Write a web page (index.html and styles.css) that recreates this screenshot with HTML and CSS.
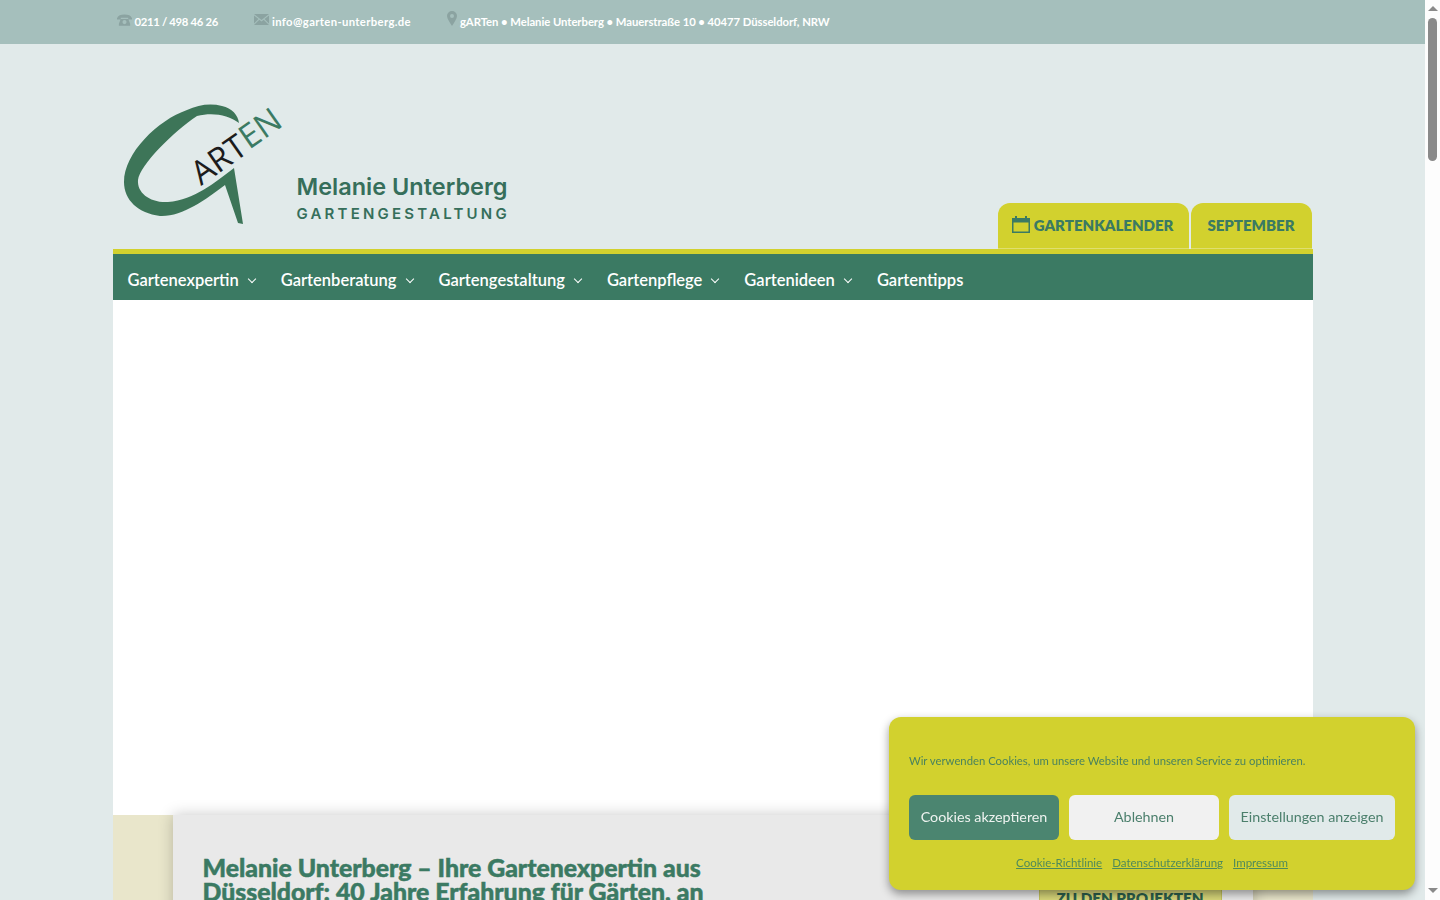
FILE: index.html
```html
<!DOCTYPE html>
<html>
<head>
    <title>Melanie Unterberg - Gartengestaltung</title>
    <link rel="stylesheet" href="styles.css">
</head>
<body>
    <div class="topbar">
        <div class="topbar-inner">
            <span class="contact contact-phone">
                <svg class="contact-icon" width="15" height="12" viewBox="0 0 16 12"><path d="M0 4C1 1 4 0 8 0s7 1 8 4v1.500h-4V3.500H4v2H0zM4 5h8l2 5v2H2v-2zM8 6a2.200 2.200 0 1 0 0 4.400A2.200 2.200 0 0 0 8 6z"/></svg>
                0211 / 498 46 26
            </span>
            <span class="contact contact-mail">
                <svg class="contact-icon" width="15" height="11" viewBox="0 0 15 11"><path d="M0 0h15L7.500 6zM0 1.500l4.500 3.600L0 9.500zM15 1.500l-4.500 3.600 4.500 4.400zM5.300 5.800l2.200 1.700 2.200-1.700L15 11H0z"/></svg>
                info@garten-unterberg.de
            </span>
            <span class="contact contact-address">
                <svg class="contact-icon pin" width="10" height="15" viewBox="0 0 10 15"><path d="M5 0a5 5 0 0 1 5 5c0 3-3 6.500-5 10C3 11.500 0 8 0 5a5 5 0 0 1 5-5zm0 3a2 2 0 1 0 0 4 2 2 0 0 0 0-4z" fill-rule="evenodd"/></svg>
                gARTen • Melanie Unterberg • Mauerstraße 10 • 40477 Düsseldorf, NRW
            </span>
        </div>
    </div>

    <div class="wrap">
        <header class="header">
            <div class="logo">
                <svg class="logo-mark" width="160" height="120" viewBox="14 10 160 120">
                    <path class="logo-g" d="M129 28C128 20 122 13 112 11 100 8 88 10 77 15 48 25 14 58 14 87 14 105 28 118 50 121 72 122 95 105 115 90L128 128 133 129 124 73C105 87 85 105 58 107 40 108 27 98 28 85 30 70 64 36 87 21 103 17 118 20 129 28z"/>
                    <text class="logo-art" transform="translate(91 91) rotate(-35)">ART</text>
                    <text class="logo-en" transform="translate(139 55) rotate(-35)">EN</text>
                </svg>
                <div class="logo-text">
                    <div class="logo-name">Melanie Unterberg</div>
                    <div class="logo-sub">GARTENGESTALTUNG</div>
                </div>
            </div>
            <div class="tabs">
                <a class="tab">
                    <svg width="18" height="17" viewBox="0 0 18 17"><path d="M3 0h2v2h8V0h2v2h3v15H0V2h3zM1.500 6.500v9h15v-9z" fill-rule="evenodd"/></svg>
                    GARTENKALENDER
                </a>
                <a class="tab">SEPTEMBER</a>
            </div>
        </header>

        <nav class="nav">
            <a class="nav-item has-sub">Gartenexpertin</a>
            <a class="nav-item has-sub">Gartenberatung</a>
            <a class="nav-item has-sub">Gartengestaltung</a>
            <a class="nav-item has-sub">Gartenpflege</a>
            <a class="nav-item has-sub">Gartenideen</a>
            <a class="nav-item">Gartentipps</a>
        </nav>

        <main class="content">
            <div class="hero"></div>
            <section class="intro">
                <div class="intro-card">
                    <div class="intro-text">
                        <h1>Melanie Unterberg – Ihre Gartenexpertin aus Düsseldorf: 40 Jahre Erfahrung für Gärten, an denen Sie lange Freude haben</h1>
                    </div>
                    <a class="projects-btn">ZU DEN PROJEKTEN</a>
                </div>
            </section>
        </main>
    </div>

    <div class="cookie">
        <p class="cookie-msg">Wir verwenden Cookies, um unsere Website und unseren Service zu optimieren.</p>
        <div class="cookie-btns">
            <button class="btn btn-accept">Cookies akzeptieren</button>
            <button class="btn btn-deny">Ablehnen</button>
            <button class="btn btn-prefs">Einstellungen anzeigen</button>
        </div>
        <div class="cookie-links">
            <a>Cookie-Richtlinie</a>
            <a>Datenschutzerklärung</a>
            <a>Impressum</a>
        </div>
    </div>

    <div class="scrollbar">
        <span class="arrow-up"></span>
        <span class="thumb"></span>
        <span class="arrow-down"></span>
    </div>
</body>
</html>
```

FILE: styles.css
```css
:root {
    --green: #3b7a63;
    --yellow: #d2d12e;
    --pale: #e1eaea;
    --sans: Lato, "Noto Sans", sans-serif;
}

body {
    margin: 0;
    padding-right: 15px;
    background: var(--pale);
    font-family: var(--sans);
    color: var(--green);
}

.topbar {
    height: 44px;
    background: #a5bfbc;
}

.topbar-inner {
    width: 1200px;
    margin: 0 auto;
    padding-left: 4px;
    box-sizing: border-box;
    display: flex;
    gap: 36px;
    height: 44px;
    align-items: center;
}

.contact {
    display: flex;
    align-items: center;
    gap: 3px;
    color: #fff;
    font-size: 11.300px;
    font-weight: 700;
    white-space: nowrap;
    margin-top: -2px;
}

.contact-phone {
    letter-spacing: -0.300px;
}

.contact-mail {
    letter-spacing: 0.350px;
}

.contact-address {
    letter-spacing: -0.050px;
}

.contact-icon {
    fill: #8ba3a1;
    margin-top: -3px;
}

.contact-icon.pin {
    margin-top: -5px;
}

.wrap {
    width: 1200px;
    margin: 0 auto;
}

.header {
    height: 205px;
    display: flex;
    justify-content: space-between;
    align-items: flex-end;
}

.logo {
    display: flex;
    align-items: flex-end;
    padding: 0 0 24px 11px;
}

.logo-mark {
    display: block;
    overflow: visible;
}

.logo-g {
    fill: #3d7558;
}

.logo-art,
.logo-en {
    font-family: "Open Sans", sans-serif;
    font-size: 33px;
    font-weight: 400;
}

.logo-art {
    fill: #1c1c1c;
}

.logo-en {
    fill: #3b7a63;
}

.logo-text {
    margin-left: 13px;
    padding-bottom: 1px;
    color: #366f5b;
}

.logo-name {
    font-family: Inter, sans-serif;
    font-size: 23.500px;
    font-weight: 600;
    line-height: 30px;
    margin-bottom: 2px;
}

.logo-sub {
    font-family: Inter, sans-serif;
    font-size: 15px;
    font-weight: 600;
    letter-spacing: 3.200px;
    line-height: 20px;
    white-space: nowrap;
}

.tabs {
    display: flex;
    gap: 2px;
    margin-right: 1px;
}

.tab {
    height: 46px;
    box-sizing: border-box;
    padding: 0 16px 2px 14px;
    display: flex;
    align-items: center;
    gap: 4px;
    background: var(--yellow);
    border-bottom: 1px solid #dfdf70;
    border-radius: 12px 12px 0 0;
    font-size: 15px;
    font-weight: 800;
    white-space: nowrap;
}

.tab + .tab {
    padding: 0 17px 2px 16px;
}

.tab svg {
    fill: var(--green);
}

.nav {
    height: 41px;
    border-top: 5px solid var(--yellow);
    background: var(--green);
    display: flex;
    gap: 22px;
    padding: 5px 0 0 15px;
    align-items: center;
}

.nav-item {
    display: flex;
    align-items: center;
    color: #fff;
    font-size: 16.500px;
    font-weight: 600;
    white-space: nowrap;
}

.nav-item.has-sub::after {
    content: "";
    width: 5px;
    height: 5px;
    margin: -2px 4px 0 10px;
    border-right: 1.500px solid #fff;
    border-bottom: 1.500px solid #fff;
    transform: rotate(45deg);
}

.content {
    background: #fff;
}

.hero {
    height: 515px;
}

.intro {
    background: #e9e6cb;
    padding: 0 60px;
}

.intro-card {
    background: #e9e9e9;
    box-shadow: 0 0 14px rgba(0, 0, 0, 0.22);
    padding: 41px 31px 60px 30px;
    display: flex;
    justify-content: space-between;
    align-items: flex-start;
}

.intro-text {
    width: 520px;
}

h1 {
    margin: 0;
    font-family: Lato, sans-serif;
    font-size: 24.800px;
    font-weight: 900;
    line-height: 24px;
    -webkit-text-stroke: 0.500px var(--green);
}

.projects-btn {
    margin: 26px 0 0;
    padding: 6px 17px;
    background: #d8d779;
    border: 1px solid #c5c45c;
    font-size: 15.200px;
    font-weight: 800;
    color: #2c5f4c;
    white-space: nowrap;
}

.cookie {
    position: fixed;
    left: 889px;
    top: 717px;
    width: 526px;
    height: 173px;
    padding: 35px 20px 0;
    box-sizing: border-box;
    background: var(--yellow);
    border-radius: 12px;
    box-shadow: 0 4px 10px rgba(0, 0, 0, 0.4);
}

.cookie-msg {
    margin: 0;
    font-size: 11.300px;
    line-height: 18px;
    opacity: 0.9;
}

.cookie-btns {
    display: grid;
    grid-template-columns: 150px 150px 166px;
    gap: 10px;
    margin-top: 25px;
}

.btn {
    height: 45px;
    border: none;
    border-radius: 6px;
    font-family: var(--sans);
    font-size: 14.300px;
    white-space: nowrap;
    padding: 0 0 2px;
}

.btn-accept {
    background: #4b8570;
    color: #eef3f0;
}

.btn-deny {
    background: #f1f1f1;
    color: #4b7f6c;
}

.btn-prefs {
    background: var(--pale);
    color: #4b7f6c;
}

.cookie-links {
    display: flex;
    justify-content: center;
    gap: 10px;
    margin-top: 16px;
    font-size: 11.500px;
}

.cookie-links a {
    text-decoration: underline;
    color: #4f8a5a;
}

.scrollbar {
    position: fixed;
    top: 0;
    right: 0;
    bottom: 0;
    width: 15px;
    background: #fdfdfd;
    display: flex;
    flex-direction: column;
    align-items: center;
    padding: 6px 0;
    box-sizing: border-box;
}

.arrow-up,
.arrow-down {
    width: 0;
    height: 0;
    border-left: 5px solid transparent;
    border-right: 5px solid transparent;
}

.arrow-up {
    border-bottom: 5px solid #8a8a8a;
}

.arrow-down {
    margin-top: auto;
    margin-bottom: 1px;
    border-top: 5px solid #8a8a8a;
}

.thumb {
    width: 9px;
    height: 143px;
    margin-top: 7px;
    border-radius: 5px;
    background: #8a8a8a;
}
```
